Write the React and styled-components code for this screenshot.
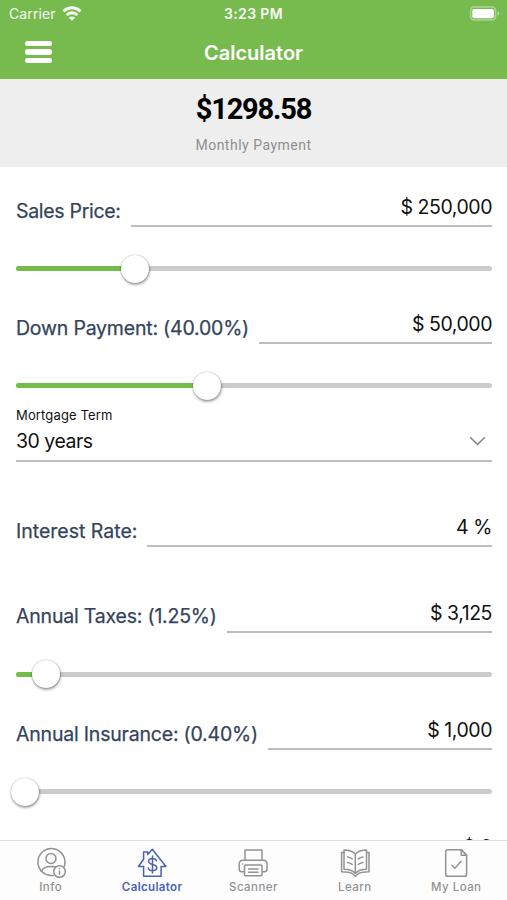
import React from "react";
import styled, { createGlobalStyle } from "styled-components";

const GlobalStyle = createGlobalStyle`
  * { box-sizing: border-box; }
  body { margin: 0; background: #fff; }
`;

const Screen = styled.div`
  display: flex;
  flex-direction: column;
  width: 507px;
  height: 900px;
  overflow: hidden;
  background: #fff;
  font-family: Inter, "Liberation Sans", sans-serif;
  color: #111;
`;

const Header = styled.header`
  flex: none;
  height: 79px;
  background: #77bb4f;
  color: #fff;
`;

const StatusBar = styled.div`
  display: grid;
  grid-template-columns: 1fr auto 1fr;
  align-items: center;
  height: 27px;
  padding: 0 7px;
`;

const Carrier = styled.div`
  display: flex;
  align-items: center;
  gap: 6px;
  padding-left: 2px;
  font-size: 14px;
  letter-spacing: 0.1px;
  opacity: 0.92;
`;

const Clock = styled.div`
  font-size: 14px;
  font-weight: 600;
  letter-spacing: 0.35px;
  opacity: 0.95;
`;

const BatteryIcon = styled.svg`
  justify-self: end;
  display: block;
`;

const NavBar = styled.div`
  display: grid;
  grid-template-columns: 1fr auto 1fr;
  align-items: center;
  height: 50px;
  padding: 0 25px;
`;

const MenuButton = styled.button`
  display: flex;
  flex-direction: column;
  gap: 3.5px;
  width: 27px;
  padding: 0;
  border: 0;
  background: none;
`;

const MenuBar = styled.span`
  height: 5.2px;
  border-radius: 3px;
  background: #fff;
`;

const Title = styled.h1`
  margin: 1px 0 0;
  font-size: 20px;
  font-weight: 600;
`;

const Summary = styled.section`
  flex: none;
  display: flex;
  flex-direction: column;
  align-items: center;
  height: 88px;
  padding-top: 13px;
  background: #eeeeee;
`;

const Amount = styled.div`
  font-family: Roboto, sans-serif;
  font-size: 29px;
  line-height: 34px;
  font-weight: 700;
  letter-spacing: -1.15px;
  color: #000;
`;

const Caption = styled.div`
  margin-top: 9px;
  font-family: Roboto, sans-serif;
  font-size: 14px;
  line-height: 20px;
  letter-spacing: 0.5px;
  color: #8f8f8f;
`;

const Form = styled.main`
  flex: 1;
  min-height: 0;
  overflow: hidden;
  padding: 0 15px 0 16px;
`;

const FieldRow = styled.div`
  display: flex;
  align-items: flex-end;
  justify-content: flex-end;
  gap: 10px;
  height: ${(p) => p.$height || 60}px;
`;

const FieldLabel = styled.div`
  flex: none;
  width: ${(p) => p.$width}px;
  padding-bottom: 3.5px;
  font-size: 19.5px;
  line-height: 25px;
  letter-spacing: ${(p) => p.$tracking}px;
  -webkit-text-stroke: 0.25px currentColor;
  white-space: nowrap;
  color: #34445a;
`;

const FieldValue = styled.div`
  flex: 1;
  padding-bottom: 5px;
  border-bottom: 2px solid #bdbdbd;
  font-size: 19.5px;
  line-height: 25px;
  letter-spacing: -0.45px;
  text-align: right;
  white-space: nowrap;
`;

const SliderBox = styled.div`
  height: ${(p) => p.$height || 57.5}px;
  padding-top: 39px;
`;

const Track = styled.div`
  position: relative;
  height: 5px;
  border-radius: 3px;
  background: #cccccc;
`;

const Fill = styled.div`
  height: 5px;
  border-radius: 3px;
  background: #73be4b;
`;

const Knob = styled.div`
  position: absolute;
  top: -11.5px;
  width: 28px;
  height: 28px;
  margin-left: -14px;
  border-radius: 50%;
  background: #fff;
  box-shadow: 0.5px 1.5px 3px rgba(0, 0, 0, 0.45), 0 0 1px rgba(0, 0, 0, 0.35);
`;

const Select = styled.div`
  height: 61px;
  padding-top: 5px;
  border-bottom: 2px solid #bfbfbf;
`;

const SelectLabel = styled.div`
  font-size: 13px;
  line-height: 18px;
  letter-spacing: 0.15px;
`;

const SelectValue = styled.div`
  display: flex;
  align-items: center;
  justify-content: space-between;
  height: 33px;
  padding-right: 6px;
  font-size: 19.5px;
  letter-spacing: -0.5px;
`;

const TabBar = styled.nav`
  flex: none;
  display: grid;
  grid-template-columns: repeat(5, 1fr);
  height: 60px;
  border-top: 1px solid #dedede;
  background: #fdfdfd;
`;

const Tab = styled.div`
  display: flex;
  flex-direction: column;
  align-items: center;
  padding-top: 6px;
  color: ${(p) => (p.$active ? "#4a62b3" : "#929292")};

  svg {
    display: block;
    width: 32px;
    height: 32px;
    fill: none;
    stroke: currentColor;
    stroke-width: 1.5;
    stroke-linecap: round;
    stroke-linejoin: round;
  }
`;

const TabLabel = styled.span`
  font-size: 11.5px;
  font-weight: ${(p) => (p.$active ? 600 : 500)};
  line-height: 16px;
  letter-spacing: ${(p) => (p.$active ? 0.35 : 0.45)}px;
`;

const WifiIcon = () => (
  <svg width="20" height="15" viewBox="0 0 20 15" fill="none" stroke="#fff" strokeWidth="3">
    <path d="M1.5 5.2C6.3 .5 13.7 .5 18.5 5.2" />
    <path d="M4.6 9C7.7 6.1 12.3 6.1 15.4 9" />
    <path d="M6.9 11.7C8.7 10.1 11.3 10.1 13.1 11.7L10 14.8Z" fill="#fff" stroke="none" />
  </svg>
);

const InfoIcon = () => (
  <svg viewBox="0 0 32 32">
    <path d="M18.5 28.4A13.5 13.5 0 1 1 29.3 19.2" />
    <circle cx="16" cy="11.5" r="5" />
    <path d="M6.3 24.4C8 20.8 11.2 19.5 16 19.5c2 0 3.6.2 4.8.6" />
    <circle cx="24.5" cy="24.5" r="5.8" />
    <path d="M24.5 24v3.3M24.5 21.6v.1" />
  </svg>
);

const HouseIcon = () => (
  <svg viewBox="0 0 32 32">
    <path d="M7.6 19.5v9.8h17.5V19.5h4.8L16.3 2.3l-4.6 5.2V5H7.6v7.2L2.4 19.5h5.2" />
    <path d="M20.5 13.8c-.5-1.6-2-2.4-4-2.4-2.3 0-3.9 1-3.9 2.9 0 4.3 8.2 2 8.2 6.3 0 2-1.6 3.1-4.2 3.1-2.3 0-4-.9-4.3-2.8M16.5 9v17" />
  </svg>
);

const PrinterIcon = () => (
  <svg viewBox="0 0 32 32">
    <path d="M8 13.3V3h17v10.3" />
    <path d="M7.5 24.8H4.8C3.5 24.8 2.2 23.7 2.2 22v-5c0-2.2 1.4-3.7 3.6-3.7h20.6c2.2 0 3.6 1.5 3.6 3.7v5c0 1.7-1.2 2.8-2.7 2.8h-2" />
    <rect x="7.5" y="18" width="17.5" height="10.8" rx="1" />
    <path d="M11.5 22h9.5M11.5 25.3h9.5M5.7 16.9v.1" />
  </svg>
);

const BookIcon = () => (
  <svg viewBox="0 0 32 32">
    <path d="M16.3 7C13.5 4.2 9.5 3 5 3v19.3c4.5 0 8.5 1.1 11.3 4.2 2.8-3.1 6.8-4.2 11.2-4.2V3c-4.4 0-8.4 1.2-11.2 4zM16.3 7v19.5" />
    <path d="M5 5.5H2.6v19.3c5 0 9 .3 11.5 2.5l2.2 2 2.2-2c2.5-2.2 6.5-2.5 11.5-2.5V5.5h-2.5" />
    <path d="M8.5 10c2 .2 3.4.9 4.7 1.9M8.5 15.5c2 .2 3.4.9 4.7 1.9M24 10c-2 .2-3.4.9-4.7 1.9M24 15.5c-2 .2-3.4.9-4.7 1.9" />
  </svg>
);

const LoanIcon = () => (
  <svg viewBox="0 0 32 32">
    <path d="M21.2 2.8H7.5c-1 0-1.8.8-1.8 1.8v22.8c0 1 .8 1.8 1.8 1.8h17.3c1 0 1.8-.8 1.8-1.8V8.3z" />
    <path d="M21.2 2.8v5.5h5.4zM11.8 18.2l3.2 3 5.9-6.6" />
  </svg>
);

const Slider = ({ knob, fill, height }) => (
  <SliderBox $height={height}>
    <Track>
      <Fill style={{ width: fill }} />
      <Knob style={{ left: knob }} />
    </Track>
  </SliderBox>
);

const Field = ({ label, width, tracking = -0.2, value, height }) => (
  <FieldRow $height={height}>
    {label && <FieldLabel $width={width} $tracking={tracking}>{label}</FieldLabel>}
    <FieldValue>{value}</FieldValue>
  </FieldRow>
);

const tabs = [
  { label: "Info", Icon: InfoIcon },
  { label: "Calculator", Icon: HouseIcon, active: true },
  { label: "Scanner", Icon: PrinterIcon },
  { label: "Learn", Icon: BookIcon },
  { label: "My Loan", Icon: LoanIcon },
];

export default function App() {
  return (
    <Screen>
      <GlobalStyle />
      <Header>
        <StatusBar>
          <Carrier>Carrier <WifiIcon /></Carrier>
          <Clock>3:23 PM</Clock>
          <BatteryIcon width="31" height="15" viewBox="0 0 31 15">
            <rect x="1.6" y="1" width="25" height="13" rx="3.5" fill="none" stroke="#fff" strokeOpacity=".4" strokeWidth="1.5" />
            <rect x="3.3" y="2.9" width="21.6" height="9.4" rx="1.8" fill="#fff" />
            <path d="M28.6 5.2c2 .8 2 3.8 0 4.6z" fill="#fff" fillOpacity=".5" />
          </BatteryIcon>
        </StatusBar>
        <NavBar>
          <MenuButton aria-label="Menu"><MenuBar /><MenuBar /><MenuBar /></MenuButton>
          <Title>Calculator</Title>
        </NavBar>
      </Header>
      <Summary>
        <Amount>$1298.58</Amount>
        <Caption>Monthly Payment</Caption>
      </Summary>
      <Form>
        <Field label="Sales Price:" width={105} tracking={-0.3} value="$ 250,000" />
        <Slider knob={119} fill={119} height={57} />
        <Field label="Down Payment: (40.00%)" width={233} value="$ 50,000" />
        <Slider knob={190.5} fill={190.5} height={57} />
        <Select>
          <SelectLabel>Mortgage Term</SelectLabel>
          <SelectValue>
            30 years
            <svg width="17" height="10" viewBox="0 0 17 10" fill="none" stroke="#808080" strokeWidth="1.5">
              <path d="M1.2 1.2 8.5 8.5l7.3-7.3" />
            </svg>
          </SelectValue>
        </Select>
        <Field label="Interest Rate:" width={121} tracking={0} value="4 %" height={85} />
        <Field label="Annual Taxes: (1.25%)" width={201} value="$ 3,125" height={85.5} />
        <Slider knob={29.5} fill={29.5} />
        <Field label="Annual Insurance: (0.40%)" width={242} value="$ 1,000" />
        <Slider knob={9} fill={0} height={56.5} />
        <Field value="$ 0" />
      </Form>
      <TabBar>
        {tabs.map(({ label, Icon, active }) => (
          <Tab key={label} $active={active}>
            <Icon />
            <TabLabel $active={active}>{label}</TabLabel>
          </Tab>
        ))}
      </TabBar>
    </Screen>
  );
}
